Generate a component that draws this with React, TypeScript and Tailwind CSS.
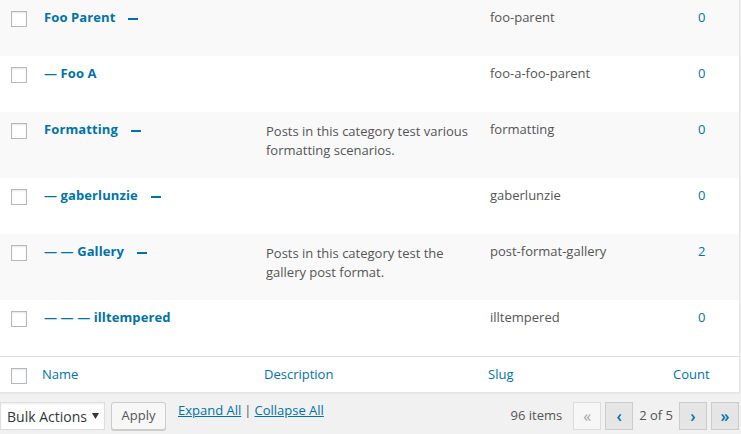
import React from "react";

type Row = {
  name: string;
  toggle: boolean;
  desc?: string[];
  slug: string;
  count: string;
  h: string;
  bg: string;
};

const rows: Row[] = [
  { name: "Foo Parent", toggle: true, slug: "foo-parent", count: "0", h: "h-[56px]", bg: "bg-[#f9f9f9]" },
  { name: "— Foo A", toggle: false, slug: "foo-a-foo-parent", count: "0", h: "h-[56px]", bg: "bg-white" },
  {
    name: "Formatting",
    toggle: true,
    desc: ["Posts in this category test various", "formatting scenarios."],
    slug: "formatting",
    count: "0",
    h: "h-[66px]",
    bg: "bg-[#f9f9f9]",
  },
  { name: "— gaberlunzie", toggle: true, slug: "gaberlunzie", count: "0", h: "h-[56px]", bg: "bg-white" },
  {
    name: "— — Gallery",
    toggle: true,
    desc: ["Posts in this category test the", "gallery post format."],
    slug: "post-format-gallery",
    count: "2",
    h: "h-[66px]",
    bg: "bg-[#f9f9f9]",
  },
  { name: "— — — illtempered", toggle: false, slug: "illtempered", count: "0", h: "h-[56px]", bg: "bg-white" },
];

function Checkbox() {
  return (
    <div className="w-[16px] h-[16px] border border-[#b4b9be] bg-white shadow-[inset_0_1px_2px_rgba(0,0,0,0.1)]" />
  );
}

export default function App() {
  return (
    <div
      className="w-[741px] h-[434px] overflow-hidden bg-[#f1f1f1]"
      style={{ fontFamily: '"Open Sans", "Noto Sans", sans-serif' }}
    >
      <div className="w-[740px] bg-white border-r border-b border-[#e5e5e5] shadow-[0_1px_1px_rgba(0,0,0,0.04)]">
        {rows.map((r, i) => (
          <div key={i} className={`flex ${r.h} ${r.bg}`}>
            <div className="w-[34px] pl-[11px] pt-[11px] shrink-0">
              <Checkbox />
            </div>
            <div className="w-[222px] shrink-0 pl-[10px] pt-[7px] flex items-start">
              <span className="text-[13px] leading-[20px] font-bold text-[#0073aa] whitespace-nowrap tracking-[0.1px]">
                {r.name}
              </span>
              {r.toggle && <span className="ml-[13px] mt-[11px] w-[10px] h-[2px] bg-[#0073aa] shrink-0" />}
            </div>
            <div className="w-[224px] shrink-0 pl-[10px] pt-[10px] text-[13px] leading-[19px] text-[#555]">
              {r.desc &&
                r.desc.map((l, j) => (
                  <div key={j} className="whitespace-nowrap">
                    {l}
                  </div>
                ))}
            </div>
            <div className="w-[183px] shrink-0 pl-[10px] pt-[7px] text-[13px] leading-[20px] text-[#555] whitespace-nowrap">
              {r.slug}
            </div>
            <div className="flex-1 pl-[35px] pt-[7px] text-[13px] leading-[20px] text-[#0073aa]">{r.count}</div>
          </div>
        ))}
        <div className="flex h-[36px] border-t border-[#e1e1e1] bg-white">
          <div className="w-[34px] pl-[11px] pt-[11px] shrink-0">
            <Checkbox />
          </div>
          <div className="w-[222px] shrink-0 pl-[8px] pt-[7px] text-[13px] leading-[20px] text-[#0073aa]">Name</div>
          <div className="w-[224px] shrink-0 pl-[8px] pt-[7px] text-[13px] leading-[20px] text-[#0073aa]">
            Description
          </div>
          <div className="w-[183px] shrink-0 pl-[8px] pt-[7px] text-[13px] leading-[20px] text-[#0073aa]">Slug</div>
          <div className="flex-1 pl-[10px] pt-[7px] text-[13px] leading-[20px] text-[#0073aa]">Count</div>
        </div>
      </div>

      <div className="flex items-start">
        <div className="mt-[9px] h-[28px] w-[105px] border border-[#ddd] bg-white pl-[6px] flex items-center text-[14px] text-[#32373c] shadow-[inset_0_1px_2px_rgba(0,0,0,0.07)]">
          <span className="whitespace-nowrap">Bulk Actions</span>
          <svg width="7" height="6" viewBox="0 0 7 6" className="ml-auto mr-[5px]">
            <path d="M0 0 L7 0 L3.5 6 Z" fill="#32373c" />
          </svg>
        </div>
        <button className="ml-[6px] mt-[9px] h-[28px] w-[55px] border border-[#ccc] bg-[#f7f7f7] rounded-[3px] shadow-[0_1px_0_#ccc] text-[13px] text-[#555] flex items-center justify-center">
          Apply
        </button>
        <div className="ml-[12px] mt-[8px] flex text-[13px] leading-[18px] text-[#555] whitespace-nowrap">
          <span className="text-[#0073aa] underline">Expand All</span>
          <span className="mx-[3px]">|</span>
          <span className="text-[#0073aa] underline">Collapse All</span>
        </div>
        <div className="ml-auto mt-[9px] mr-[2px] flex items-center h-[28px] text-[13px] text-[#555]">
          <span className="mr-[11px]">96 items</span>
          <span className="w-[28px] h-[28px] border border-[#ddd] bg-[#f7f7f7] text-[#a0a5aa] flex items-center justify-center text-[16px]">
            «
          </span>
          <span className="ml-[4px] w-[28px] h-[28px] border border-[#ccc] bg-[#e5e5e5] text-[#0073aa] flex items-center justify-center text-[16px] font-semibold">
            ‹
          </span>
          <span className="mx-[6px] whitespace-nowrap">2 of 5</span>
          <span className="w-[28px] h-[28px] border border-[#ccc] bg-[#e5e5e5] text-[#0073aa] flex items-center justify-center text-[16px] font-semibold">
            ›
          </span>
          <span className="ml-[4px] w-[28px] h-[28px] border border-[#ccc] bg-[#e5e5e5] text-[#0073aa] flex items-center justify-center text-[16px] font-semibold">
            »
          </span>
        </div>
      </div>
    </div>
  );
}
